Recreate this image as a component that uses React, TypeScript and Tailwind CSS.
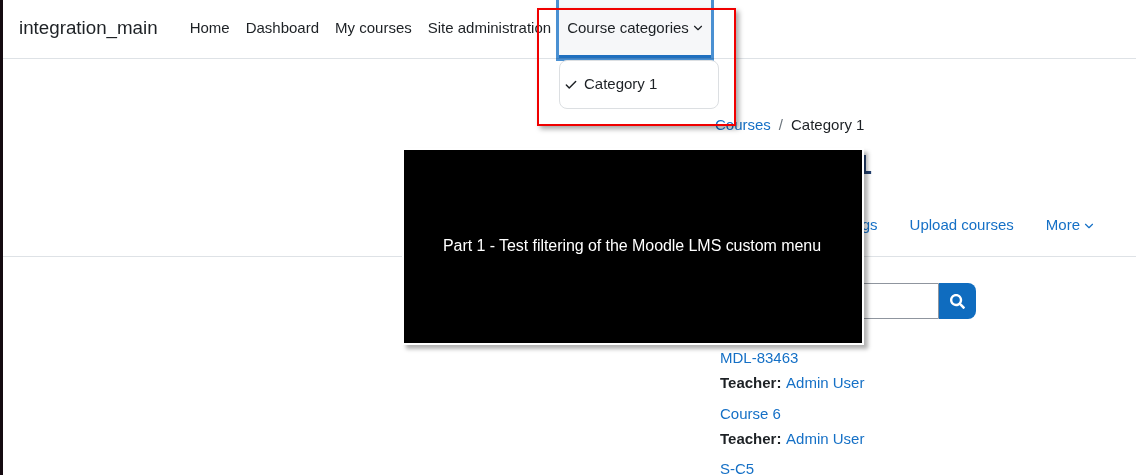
import { ChevronDown, Check } from "lucide-react";
import { FaSearch } from "react-icons/fa";

const font = { fontFamily: '"Liberation Sans", Arial, sans-serif' };

const navItems = ["Home", "Dashboard", "My courses", "Site administration"];

const courses = [
  { name: "MDL-83463", teacher: "Admin User" },
  { name: "Course 6", teacher: "Admin User" },
  { name: "S-C5", teacher: null },
];

export default function App() {
  return (
    <div
      style={font}
      className="relative flex h-[475px] w-[1136px] overflow-hidden bg-white text-[15px] text-[#1d2125]"
    >
      {/* dark edge of the window */}
      <div className="w-[3px] shrink-0 bg-[#140a10]" />

      <div className="flex min-w-0 flex-1 flex-col">
        {/* Top navbar */}
        <header className="flex h-[59px] shrink-0 items-center border-b border-[#dee2e6] pb-[2px] pl-4">
          <span className="text-[18.75px] leading-none">integration_main</span>
          <nav className="ml-6 flex items-center">
            {navItems.map((item) => (
              <a key={item} className="px-2 leading-[22px]">
                {item}
              </a>
            ))}
            <a className="flex items-center pl-2 leading-[22px]">
              Course categories
              <ChevronDown size={14} strokeWidth={2} className="ml-[2px]" />
            </a>
          </nav>
        </header>

        {/* Page content */}
        <main className="flex flex-1 flex-col">
          <div className="ml-[712px] mt-[55px] flex h-[22px] items-center gap-2 leading-[22px]">
            <a className="text-[#1570c6]">Courses</a>
            <span className="text-[#6a737b]">/</span>
            <span>Category 1</span>
          </div>

          {/* only the end of the heading shows past the popup */}
          <h1 className="ml-[860px] mt-[9px] h-[46px] origin-left scale-x-50 text-[28px] font-bold leading-[39px] text-[#23406e]">L</h1>

          <div className="mt-[17px] flex h-[49px] items-center justify-end border-b border-[#dee2e6] pb-[13px] pr-[40px] text-[#1570c6]">
            <a>Settings</a>
            <a className="ml-8">Upload courses</a>
            <a className="ml-8 flex items-center">
              More
              <ChevronDown size={14} strokeWidth={2} className="ml-[2px]" />
            </a>
          </div>

          <div className="ml-[717px] mt-[26px] flex h-9 w-[256px]">
            <div className="flex-1 rounded-l-lg border border-[#8f959e] bg-white" />
            <button className="flex w-[37px] items-center justify-center rounded-r-lg bg-[#0f6cbf] text-white">
              <FaSearch size={15} />
            </button>
          </div>

          <ul className="ml-[717px] mt-[28px] flex flex-col gap-[9px]">
            {courses.map((c) => (
              <li key={c.name} className="flex flex-col gap-[3px] leading-[22px] last:mt-[4px] last:leading-[12px]">
                <a className="text-[#1570c6]">{c.name}</a>
                {c.teacher && (
                  <span>
                    <strong className="font-bold">Teacher:</strong>{" "}
                    <a className="ml-[0.5px] text-[#1570c6]">{c.teacher}</a>
                  </span>
                )}
              </li>
            ))}
          </ul>
        </main>
      </div>

      {/* Focus outline on the open menu item */}
      <div className="absolute left-[556px] top-[-6px] h-[67px] w-[158px] border-[3px] border-[#4a90d2] bg-[#f6f7f9] mix-blend-multiply">
        <div className="absolute inset-x-0 bottom-0 h-[3px] bg-[#1f6fbf]" />
      </div>

      {/* Dropdown */}
      <div className="absolute left-[559px] top-[60px] flex h-[49px] w-[160px] items-center rounded-lg border border-[#dcdfe2] bg-white">
        <Check size={14} strokeWidth={2.5} className="ml-[4px]" />
        <span className="ml-[6px]">Category 1</span>
      </div>

      {/* Tour highlight box */}
      <div className="absolute left-[537px] top-[8px] h-[118px] w-[199px] border-[2px] border-[#f00000] shadow-[3px_3px_5px_rgba(0,0,0,0.35)]" />

      {/* Tour step popup */}
      <div className="absolute left-[404px] top-[150px] flex h-[193px] w-[458px] items-center justify-center bg-black pb-[2px] pr-[2px] text-[16px] tracking-[-0.06px] text-white shadow-[0_0_0_2px_#fff,4px_4px_4px_2px_rgba(0,0,0,0.3)]">
        <span>Part 1 - Test filtering of the Moodle LMS custom menu</span>
      </div>
    </div>
  );
}
